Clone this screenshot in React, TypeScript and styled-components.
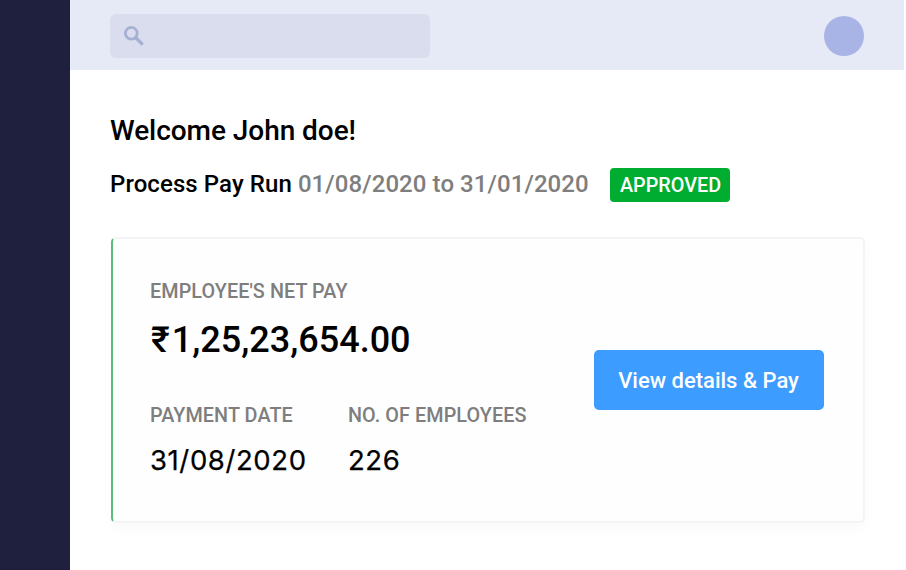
import React from "react";
import styled, { createGlobalStyle } from "styled-components";

const Global = createGlobalStyle`
  *, *::before, *::after { box-sizing: border-box; }
  body { margin: 0; background: #fff; font-family: Roboto, "Liberation Sans", sans-serif; color: #000; overflow: hidden; }
  h1, h2, p, dl, dt, dd { margin: 0; font-weight: 500; }
`;

const Shell = styled.div`
  display: grid;
  grid-template-columns: 70px 834px;
  height: 570px;
`;

const Sidebar = styled.aside`
  background: #1f203d;
`;

const Main = styled.main`
  display: flex;
  flex-direction: column;
`;

const Topbar = styled.header`
  display: flex;
  align-items: center;
  justify-content: space-between;
  height: 70px;
  padding: 2px 40px 0;
  background: #e5eaf6;
`;

const Search = styled.div`
  display: flex;
  align-items: center;
  width: 320px;
  height: 44px;
  padding-left: 14px;
  border-radius: 6px;
  background: #dadded;
`;

const Avatar = styled.div`
  width: 40px;
  height: 40px;
  border-radius: 50%;
  background: #a8b4e5;
`;

const Content = styled.section`
  padding: 45px 39px 0 40px;
`;

const Welcome = styled.h1`
  font-size: 28px;
  line-height: 32px;
  letter-spacing: -0.05px;
`;

const RunLine = styled.div`
  display: flex;
  align-items: center;
  height: 34px;
  margin-top: 21px;
`;

const RunTitle = styled.h2`
  width: 500px;
  padding-bottom: 2px;
  font-size: 24px;
  line-height: 32px;
  letter-spacing: 0.08px;
  white-space: nowrap;
`;

const Muted = styled.span`
  color: #7e7e7e;
`;

const Badge = styled.span`
  width: 120px;
  height: 34px;
  padding-left: 1px;
  border-radius: 4px;
  background: #00ad31;
  color: #fff;
  font-size: 19.8px;
  font-weight: 500;
  line-height: 35px;
  text-align: center;
`;

const Card = styled.article`
  display: flex;
  justify-content: space-between;
  width: 754px;
  height: 286px;
  margin: 35px 0 0 1px;
  padding: 41px 39px 0 37px;
  border: 2px solid #f4f4f6;
  border-left: 2px solid #57bd7b;
  border-radius: 5px;
  background: #fefefe;
  box-shadow: 0 6px 14px rgba(30, 30, 60, 0.025);
`;

const Label = styled.dt`
  color: #7e7e7e;
  font-size: 19.8px;
  font-weight: 500;
  line-height: 24px;
  letter-spacing: 0.08px;
  white-space: nowrap;
`;

const Amount = styled.dd`
  margin-top: 16px;
  font-size: 36px;
  line-height: 40px;
`;

const Currency = styled.span`
  margin: 0 2px 0 1px;
`;

const Facts = styled.div`
  display: grid;
  grid-template-columns: 198px auto;
  margin-top: 44px;
`;

const Value = styled.dd`
  margin-top: 16px;
  font-family: Inter, sans-serif;
  font-size: 27.5px;
  font-weight: 400;
  line-height: 32px;
  letter-spacing: 0.6px;
  -webkit-text-stroke: 0.25px #000;
`;

const PayButton = styled.button`
  width: 230px;
  height: 60px;
  margin-top: 70px;
  padding: 0 1px 0 0;
  border: 0;
  border-radius: 5px;
  background: #3c9cff;
  color: #fff;
  font: 500 22px/62px Roboto, sans-serif;
`;

export default function App() {
  return (
    <Shell>
      <Global />
      <Sidebar />
      <Main>
        <Topbar>
          <Search>
            <svg width="20" height="20" viewBox="0 0 20 20" fill="none" stroke="#a5b0d2" strokeWidth="2.8">
              <circle cx="7.3" cy="7.3" r="5.9" />
              <path d="M11.5 11.5L18.7 18.7" strokeWidth="3.2" />
            </svg>
          </Search>
          <Avatar />
        </Topbar>
        <Content>
          <Welcome>Welcome John doe!</Welcome>
          <RunLine>
            <RunTitle>Process Pay Run <Muted>01/08/2020 to 31/01/2020</Muted></RunTitle>
            <Badge>APPROVED</Badge>
          </RunLine>
          <Card>
            <dl>
              <Label>EMPLOYEE'S NET PAY</Label>
              <Amount><Currency>₹</Currency>1,25,23,654.00</Amount>
              <Facts>
                <div>
                  <Label>PAYMENT DATE</Label>
                  <Value>31/08/2020</Value>
                </div>
                <div>
                  <Label>NO. OF EMPLOYEES</Label>
                  <Value>226</Value>
                </div>
              </Facts>
            </dl>
            <PayButton>View details &amp; Pay</PayButton>
          </Card>
        </Content>
      </Main>
    </Shell>
  );
}
